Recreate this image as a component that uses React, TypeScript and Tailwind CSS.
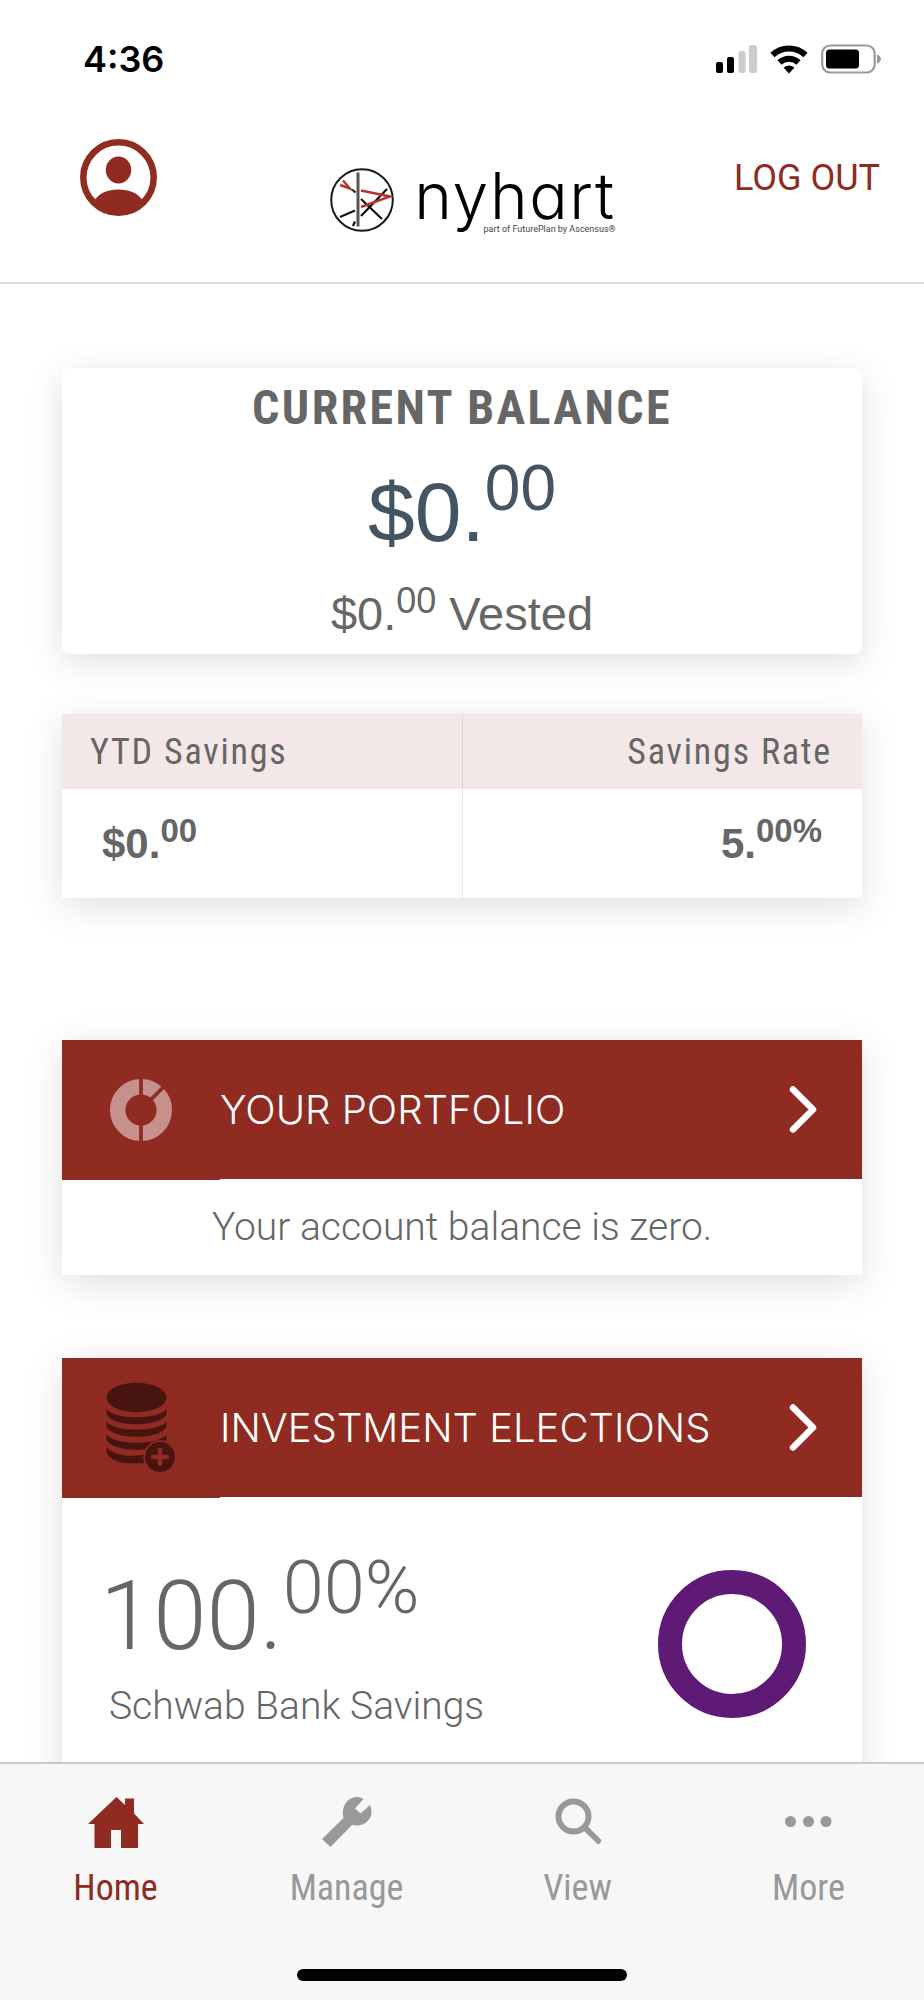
import type { ReactNode } from 'react';

const NARROW = "font-['Roboto_Condensed',Roboto,sans-serif]";
const CARD_SHADOW = 'shadow-[0_8px_36px_rgba(0,0,0,0.13)]';

interface AmountProps {
  whole: string;
  cents: string;
  /** size and lift of the raised part */
  centsClass: string;
}

/** Number with its decimals raised next to the point */
function Amount({ whole, cents, centsClass }: AmountProps) {
  return (
    <>
      {whole}
      <span className={`leading-0 ${centsClass}`}>{cents}</span>
    </>
  );
}

function StatusBar() {
  return (
    <div className="flex items-center justify-between pl-[83px] pr-[42px] pt-[37px]">
      <span className="font-[Inter,sans-serif] text-[36px] leading-[44px] font-semibold text-black">4:36</span>
      <div className="flex items-center">
        <svg width="42" height="30" viewBox="0 0 42 30" aria-hidden="true">
          <rect x="0" y="18" width="7" height="11" rx="2" fill="#000" />
          <rect x="11" y="13" width="7" height="16" rx="2" fill="#000" />
          <rect x="22.500" y="7" width="7" height="22" rx="2" fill="#ccc" />
          <rect x="33" y="1" width="8" height="28" rx="2" fill="#ccc" />
        </svg>
        <svg className="ml-3" width="38" height="30" viewBox="0 0 38 30" aria-hidden="true">
          <path d="M2.500 11a24 24 0 0 1 33 0" fill="none" stroke="#000" strokeWidth="6" />
          <path d="M9.500 18.500a14 14 0 0 1 19 0" fill="none" stroke="#000" strokeWidth="6" />
          <path d="M13.500 23.500a9.500 9.500 0 0 1 11 0L19 29.500z" fill="#000" />
        </svg>
        <svg className="ml-[13px]" width="61" height="30" viewBox="0 0 61 30" aria-hidden="true">
          <rect x="1.200" y="1.500" width="52.500" height="27" rx="8" fill="none" stroke="#999" strokeWidth="2.200" />
          <rect x="5" y="5.500" width="33" height="19" rx="3.500" fill="#000" />
          <path d="M56 10.500c2.600 1 4 2.700 4 4.500s-1.400 3.500-4 4.500z" fill="#999" />
        </svg>
      </div>
    </div>
  );
}

function Logo() {
  return (
    <div className="mt-[29px] flex h-[64px]">
      <svg width="64" height="64" viewBox="0 0 64 64" fill="none" aria-hidden="true">
        <circle cx="32" cy="32" r="30.800" stroke="#1a1a1a" strokeWidth="2" />
        <path d="M28 4.500v54" stroke="#555" strokeWidth="3" />
        <path d="M10 49l15-6.500M31 31l21 20M31 48l26-27M22 21.500l3.500 3M23 58l2-4.500" stroke="#111" strokeWidth="2.200" />
        <path d="M31 22.500l29 6L31 39M10 17l10 3.500L13 12.500" stroke="#b23330" strokeWidth="2.400" />
      </svg>
      <div className="ml-5 flex flex-col items-end text-black">
        <span className="font-[Inter,sans-serif] text-[64px] leading-[56px] font-light tracking-wide [font-feature-settings:'cv11']">
          nyhart
        </span>
        <span className="font-[Roboto,sans-serif] text-[9px] leading-[10px] text-[#444]">
          part of FuturePlan by Ascensus®
        </span>
      </div>
    </div>
  );
}

function Header() {
  return (
    <header className="h-[284px] shrink-0 border-b-2 border-[#dcdcdc]">
      <StatusBar />
      <div className="grid grid-cols-[1fr_auto_1fr] items-start pl-[66px] pr-11 pt-[58px]">
        <button type="button" aria-label="Profile" className="ml-[14px] justify-self-start">
          <svg width="77" height="77" viewBox="0 0 77 77">
            <circle cx="38.500" cy="38.500" r="35.200" fill="none" stroke="#902b22" strokeWidth="6.500" />
            <ellipse cx="38.500" cy="31" rx="12.700" ry="13.500" fill="#902b22" />
            <path d="M14 62C19 54 28 50.500 38.500 50.500S58 54 63 62C57 70 48 75 38.500 75S20 70 14 62z" fill="#902b22" />
          </svg>
        </button>
        <Logo />
        <button
          type="button"
          className="justify-self-end font-[Roboto,sans-serif] text-[36px] leading-[78px] text-[#902b22]"
        >
          LOG OUT
        </button>
      </div>
    </header>
  );
}

function BalanceCard() {
  return (
    <section className={`rounded-lg bg-white pt-3 text-center ${CARD_SHADOW}`}>
      <h1 className={`${NARROW} text-[48px] leading-[56px] font-bold tracking-wider text-[#666]`}>CURRENT BALANCE</h1>
      <p className="mt-[14px] font-['Liberation_Sans',sans-serif] text-[84px] leading-[124px] text-[#455463]">
        <Amount whole="$0." cents="00" centsClass="text-[64px] align-[31px]" />
      </p>
      <p className="font-['Liberation_Sans',sans-serif] text-[47px] leading-[80px] text-[#666]">
        <Amount whole="$0." cents="00" centsClass="text-[36px] align-[17px]" /> Vested
      </p>
    </section>
  );
}

function SavingsTable() {
  return (
    <table className={`mt-[60px] w-full table-fixed bg-white text-[#666] ${CARD_SHADOW}`}>
      <thead className={`${NARROW} bg-[#f3e8e7] text-[36px] tracking-wider`}>
        <tr className="h-[75px]">
          <th className="border-r border-[#dfd6d5] pl-7 text-left font-normal">YTD Savings</th>
          <th className="pr-[30px] text-right font-normal">Savings Rate</th>
        </tr>
      </thead>
      <tbody className="font-['Liberation_Sans',sans-serif] text-[42px] font-bold">
        <tr className="h-[109px]">
          <td className="border-r border-[#e8e8e8] pl-10">
            <Amount whole="$0." cents="00" centsClass="text-[33px] align-[16px]" />
          </td>
          <td className="pr-10 text-right">
            <Amount whole="5." cents="00%" centsClass="text-[33px] align-[16px]" />
          </td>
        </tr>
      </tbody>
    </table>
  );
}

function PanelHeader({ icon, title }: { icon: ReactNode; title: string }) {
  return (
    <button type="button" className="flex w-full items-start text-left text-white">
      <span className="flex h-[140px] w-[158px] items-center justify-center bg-[#902b22]">{icon}</span>
      <span className="flex h-[139px] flex-1 items-center justify-between bg-[#902b22] pr-[45px]">
        <span className="font-[Inter,sans-serif] text-[40px] leading-[48px] font-light">{title}</span>
        <svg width="28" height="48" viewBox="0 0 28 48" fill="none" aria-hidden="true">
          <path d="M4 3.500l20 20L4 43.500" stroke="#fff" strokeWidth="6.500" strokeLinecap="round" strokeLinejoin="round" />
        </svg>
      </span>
    </button>
  );
}

function PieIcon() {
  return (
    <svg width="62" height="62" viewBox="0 0 62 62" aria-hidden="true">
      <circle cx="31" cy="31" r="23.300" fill="none" stroke="#c6918c" strokeWidth="15.400" />
      <path d="M31 0v17M31 45v17M41 20.500l16-16" stroke="#902b22" strokeWidth="3.800" />
    </svg>
  );
}

function CoinsIcon() {
  return (
    <svg width="70" height="92" viewBox="0 0 70 92" fill="#481410" aria-hidden="true">
      <ellipse cx="30.500" cy="15.500" rx="30" ry="14.700" />
      <path d="M.5 27C8 38 53 38 60.500 27V32.500C53 45.500 8 45.500 .5 32.500z" />
      <path d="M.5 39.500C8 50.500 53 50.500 60.500 39.500V45C53 58 8 58 .5 45z" />
      <path d="M.5 52.500C8 63.500 53 63.500 60.500 52.500V58C53 71 8 71 .5 58z" />
      <path d="M.5 65C8 75 30 75 40 72V81C22 82.500 4 81 .5 70z" />
      <circle cx="54" cy="75" r="15.800" stroke="#902b22" strokeWidth="1.800" />
      <path d="M54 68v14M47 75h14" stroke="#902b22" strokeWidth="4.500" strokeLinecap="round" />
    </svg>
  );
}

function PortfolioCard() {
  return (
    <section className={`mt-[142px] bg-white ${CARD_SHADOW}`}>
      <PanelHeader icon={<PieIcon />} title="YOUR PORTFOLIO" />
      <p className="text-center font-[Roboto,sans-serif] text-[39px] leading-[95px] font-light text-[#666]">
        Your account balance is zero.
      </p>
    </section>
  );
}

function ElectionsCard() {
  return (
    <section className={`mt-[83px] bg-white ${CARD_SHADOW}`}>
      <PanelHeader icon={<CoinsIcon />} title="INVESTMENT ELECTIONS" />
      <div className="flex items-start justify-between pb-20 pl-[38px] pr-14 pt-14 font-[Roboto,sans-serif] font-light text-[#666]">
        <div>
          <p className="text-[96px] leading-[124px]">
            <Amount whole="100." cents="00%" centsClass="text-[74px] align-[36px]" />
          </p>
          <p className="pl-[9px] text-[39px] leading-[56px]">Schwab Bank Savings</p>
        </div>
        <svg className="mt-4" width="148" height="148" viewBox="0 0 148 148" role="img" aria-label="100% Schwab Bank Savings">
          <circle cx="74" cy="74" r="62" fill="none" stroke="#5e1a75" strokeWidth="24" />
        </svg>
      </div>
    </section>
  );
}

const TABS = [
  {
    label: 'Home',
    icon: <path d="M0 27L28.500 0l8.500 8V1.500h9V16.500L56 27h-6v24H33V33H23v18H6.500V27z" />,
  },
  {
    label: 'Manage',
    icon: (
      <path d="M3 42L24.500 21C22 11 27 1 37 0c3 0 5 .5 7.500 2L36 11.500l5.500 5L51 8c5 12-4 23-18 20L11.500 50z" />
    ),
  },
  {
    label: 'View',
    icon: (
      <>
        <circle cx="23.500" cy="19.500" r="15" fill="none" stroke="currentColor" strokeWidth="6" />
        <path d="M34 29.500l2.500-1.500L51.500 43q-.5 3-3.500 4.500L32.500 32.500z" />
      </>
    ),
  },
  {
    label: 'More',
    icon: (
      <>
        <circle cx="9.500" cy="24.500" r="5.500" />
        <circle cx="27.500" cy="24.500" r="5.500" />
        <circle cx="45" cy="24.500" r="5.500" />
      </>
    ),
  },
];

function TabBar() {
  return (
    <nav className="shrink-0 border-t-2 border-[#cacaca] bg-[#f7f7f7]">
      <div className="grid grid-cols-4 pt-[33px]">
        {TABS.map((tab, i) => (
          <a
            key={tab.label}
            href="#"
            aria-current={i === 0 ? 'page' : undefined}
            className={`flex flex-col items-center gap-4 ${i === 0 ? 'text-[#902b22]' : 'text-[#999]'}`}
          >
            <svg width="56" height="51" viewBox="0 0 56 51" fill="currentColor" aria-hidden="true">
              {tab.icon}
            </svg>
            <span className={`${NARROW} text-[36px] leading-[48px]`}>{tab.label}</span>
          </a>
        ))}
      </div>
      <div className="mx-auto mt-[57px] mb-[19px] h-3 w-[330px] rounded-full bg-black" />
    </nav>
  );
}

export default function App() {
  return (
    <div className="flex h-screen flex-col bg-white">
      <Header />
      <main className="min-h-0 flex-1 overflow-hidden px-[62px] pt-[84px]">
        <BalanceCard />
        <SavingsTable />
        <PortfolioCard />
        <ElectionsCard />
      </main>
      <TabBar />
    </div>
  );
}
